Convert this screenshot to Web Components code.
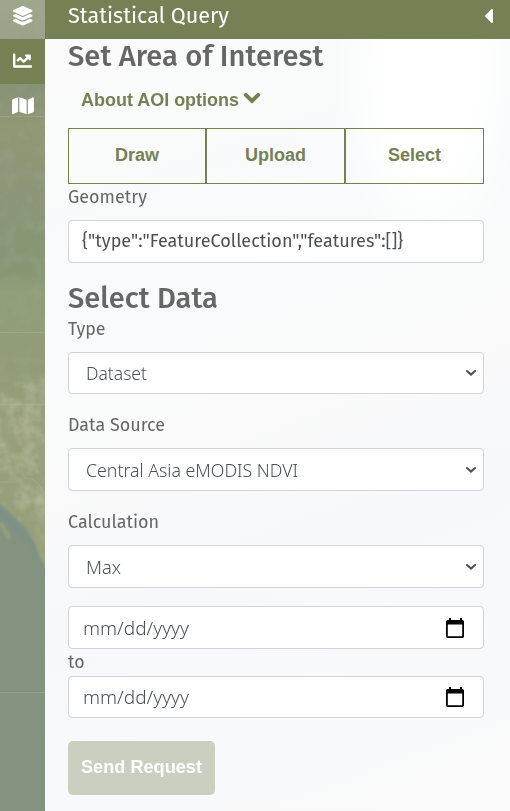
<!DOCTYPE html>
<html lang="en">
<head>
<meta charset="utf-8">
<title>Statistical Query</title>
<style>
html,body{margin:0;height:100%;overflow:hidden}
body{font-family:"Fira Sans","Noto Sans",sans-serif;color:#666;background:#f9fafb}
</style>
</head>
<body>
<query-app></query-app>
<script>
const define=(name,html,setup)=>customElements.define(name,class extends HTMLElement{
  connectedCallback(){
    if(this.shadowRoot)return;
    const t=document.createElement('template');t.innerHTML=html;
    this.attachShadow({mode:'open'}).appendChild(t.content.cloneNode(true));
    if(setup)setup(this,this.shadowRoot);
  }
});

/* Text fitted horizontally to a given advance width. */
define('fit-text',`<style>:host{display:block;white-space:pre}span{display:inline-block;transform-origin:0 50%}</style><span><slot></slot></span>`,(el,r)=>{
  const s=r.querySelector('span'),w=+el.getAttribute('w');
  s.style.transform='scaleX('+w/s.getBoundingClientRect().width+')';
  el.style.width=w+'px';
});

const icons={
layers:['0 0 512 512','M12.41 148.02l232.94 105.67c6.8 3.09 14.49 3.09 21.29 0l232.94-105.67c16.55-7.51 16.55-32.52 0-40.03L266.65 2.31a25.607 25.607 0 0 0-21.29 0L12.41 107.98c-16.55 7.51-16.55 32.53 0 40.04zm487.18 88.28l-58.09-26.33-161.64 73.27c-7.56 3.43-15.59 5.17-23.86 5.17s-16.29-1.74-23.86-5.17L70.51 209.97l-58.1 26.33c-16.55 7.5-16.55 32.5 0 40l232.94 105.59c6.8 3.08 14.49 3.08 21.29 0L499.59 276.3c16.55-7.5 16.55-32.5 0-40zm0 127.8l-57.87-26.23-161.86 73.37c-7.56 3.43-15.59 5.17-23.86 5.17s-16.29-1.74-23.86-5.17L70.29 337.87 12.41 364.1c-16.55 7.5-16.55 32.5 0 40l232.94 105.59c6.8 3.08 14.49 3.08 21.29 0L499.59 404.1c16.55-7.5 16.55-32.5 0-40z'],
chart:['0 0 512 512','M496 384H64V80c0-8.84-7.16-16-16-16H16C7.16 64 0 71.16 0 80v336c0 17.67 14.33 32 32 32h464c8.84 0 16-7.16 16-16v-32c0-8.84-7.16-16-16-16zM464 96H345.94c-21.38 0-32.09 25.85-16.97 40.97l32.4 32.4L288 242.75l-73.37-73.37c-12.5-12.5-32.76-12.5-45.25 0l-68.69 68.69c-6.25 6.25-6.25 16.38 0 22.63l22.62 22.62c6.25 6.25 16.38 6.25 22.63 0L192 237.25l73.37 73.37c12.5 12.5 32.76 12.5 45.25 0l96-96 32.4 32.4c15.12 15.12 40.97 4.41 40.97-16.97V112c.01-8.84-7.15-16-15.99-16z'],
map:['0 0 576 512','M0 117.66v346.32c0 11.32 11.43 19.06 21.94 14.86L160 416V32L20.12 87.95A32.006 32.006 0 0 0 0 117.66zM192 416l192 64V96L192 32v384zM554.06 33.16L416 96v384l139.88-55.95A31.996 31.996 0 0 0 576 394.34V48.02c0-11.32-11.43-19.06-21.94-14.86z'],
chevron:['0 0 448 512','M207.029 381.476L12.686 187.132c-9.373-9.373-9.373-24.569 0-33.941l22.667-22.667c9.357-9.357 24.522-9.375 33.901-.04L224 284.505l154.745-154.021c9.379-9.335 24.544-9.317 33.901.04l22.667 22.667c9.373 9.373 9.373 24.569 0 33.941L240.971 381.476c-9.373 9.372-24.569 9.372-33.942 0z'],
caret:['0 0 192 512','M192 127.338v257.324c0 17.818-21.543 26.741-34.142 14.142L29.196 270.142c-7.81-7.81-7.81-20.474 0-28.284l128.662-128.662c12.599-12.6 34.142-3.676 34.142 14.142z'],
arrow:['0 0 12 8','M2 2 L6 5.6 L10 2'],
calendar:['0 0 20 22','M4 1h2v2h9V1h2v2h.2C18.3 3 19 3.8 19 4.8v14.400c0 1-.8 1.800-1.800 1.800H2.800C1.800 21 1 20.200 1 19.200V4.800C1 3.800 1.800 3 2.800 3H4zM2.800 7.500v11.700h14.400V7.500z']
};
define('ui-icon',`<style>:host{display:block;flex:none}svg{display:block;width:100%;height:100%;overflow:visible;fill:currentColor}</style><svg><path fill-rule="evenodd"/></svg>`,(el,r)=>{
  const name=el.getAttribute('name'),[box,d]=icons[name],svg=r.querySelector('svg'),p=r.querySelector('path');
  svg.setAttribute('viewBox',box);p.setAttribute('d',d);
  if(name==='arrow'){p.setAttribute('fill','none');p.setAttribute('stroke','currentColor');p.setAttribute('stroke-width','2');p.setAttribute('stroke-linecap','round')}
  if(name==='chevron'){p.setAttribute('stroke','currentColor');p.setAttribute('stroke-width','34')}
  el.style.width=el.getAttribute('w')+'px';el.style.height=el.getAttribute('h')+'px';
});

define('terrain-map',`<style>:host{display:block}svg{display:block}</style>
<svg width="45" height="811" viewBox="0 0 45 811">
<defs><linearGradient id="g" x1="0" y1="0" x2="0" y2="811" gradientUnits="userSpaceOnUse">
<stop offset="0" stop-color="#9ca589"/><stop offset=".045" stop-color="#98a184"/><stop offset=".1" stop-color="#869276"/><stop offset=".16" stop-color="#909774"/><stop offset=".25" stop-color="#8b9676"/><stop offset=".335" stop-color="#879672"/><stop offset=".36" stop-color="#919f79"/><stop offset=".44" stop-color="#909c76"/><stop offset=".53" stop-color="#989f7b"/><stop offset=".62" stop-color="#95a079"/></linearGradient>
<linearGradient id="f" x2="0" y2="1"><stop stop-color="#000"/><stop offset=".25" stop-color="#fff"/><stop offset=".7" stop-color="#fff"/><stop offset="1" stop-color="#000"/></linearGradient>
<mask id="m"><rect y="350" width="45" height="210" fill="url(#f)"/></mask>
<filter id="n" x="0" y="0" width="1" height="1"><feTurbulence type="fractalNoise" baseFrequency=".055" numOctaves="3" seed="6"/><feColorMatrix values="0 0 0 0 .72  0 0 0 0 .7  0 0 0 0 .55  2 0 0 0 -.8"/></filter>
<filter id="d" x="0" y="0" width="1" height="1"><feTurbulence type="fractalNoise" baseFrequency=".06" numOctaves="4" seed="19"/><feColorMatrix values="0 0 0 0 .36  0 0 0 0 .46  0 0 0 0 .38  1.8 0 0 0 -.85"/></filter>
<filter id="b"><feGaussianBlur stdDeviation="1.5"/></filter></defs>
<rect width="45" height="811" fill="url(#g)"/>
<rect width="45" height="810" filter="url(#d)" opacity=".3"/>
<g mask="url(#m)"><rect y="350" width="45" height="210" filter="url(#n)" opacity=".5"/></g>
<path d="M-4 500 6 509 16 519 26 529 35 544 39 556 49 575V820H-4z" fill="#7f9185" filter="url(#b)"/>
<path d="M-4 513 2 522 12 532 28 543 38 560 49 578V820H-4z" fill="#83937f" filter="url(#b)"/>
<path d="M0 523 5 530 10 539" fill="none" stroke="#98a17d" stroke-width="4" filter="url(#b)"/>
<path d="M0 116.500H45M0 332.500H45M0 404.500H45M0 692.500H45M0 482H17Q33 470 45 495" fill="none" stroke="#b3ba9c" stroke-opacity=".35"/>
</svg>`);

define('side-rail',`<style>:host{display:block;position:relative;width:45px;height:811px;overflow:hidden;color:#fff}
nav{position:absolute;inset:0;display:flex;flex-direction:column}
div{height:45px;box-sizing:border-box;display:flex;align-items:center;justify-content:center;padding-bottom:3px}
.first{height:39px;background:#a6ad9b33;padding-bottom:8px}.on{background:#758055}.map{padding-bottom:2px}</style>
<terrain-map></terrain-map><nav><div class="first"><ui-icon name="layers" w="19.500" h="19.500"></ui-icon></div><div class="on"><ui-icon name="chart" w="19" h="19"></ui-icon></div><div class="map"><ui-icon name="map" w="22" h="19.500"></ui-icon></div></nav>`);

define('form-label',`<style>:host{display:block;height:var(--h,36px);box-sizing:border-box;padding-top:var(--top,0);font-size:18px;line-height:26px}</style><slot></slot>`);
define('form-field',`<style>:host{display:flex;align-items:center;justify-content:space-between;box-sizing:border-box;height:var(--h,43px);border:1px solid #ced4da;border-radius:4px;background:#fff;color:#495057;font-size:18px;line-height:26px;padding:0 var(--right,6px) 0 var(--left,17px)}</style><slot></slot>`);
define('section-title',`<style>:host{display:block;height:var(--h,34px);box-sizing:border-box;padding-top:var(--top,0);font-size:28.800px;font-weight:500;line-height:35px}</style><slot></slot>`);
define('option-group',`<style>:host{display:flex;height:56px;color:#758055;font:bold 18px/26px "Liberation Sans",sans-serif}
div{flex:0 0 138px;display:flex;align-items:center;justify-content:center;border:1px solid;box-sizing:border-box;padding-bottom:2px}.mid,.last{flex-basis:139px}</style><div>Draw</div><div class="mid">Upload</div><div class="last">Select</div>`);

define('query-app',`<style>
:host{display:grid;grid-template-columns:45px 1fr;width:510px;height:811px}
main{background:radial-gradient(ellipse 95px 200px at 385px 70px,#fff 50%,#fff0),linear-gradient(160deg,#fafaf9 0%,#f8fafb 30%,#fafafa 49%,#f7f8fb 65%,#f8f9fb 79%,#fafafa 100%);min-width:0}
header{height:39px;box-sizing:border-box;background:#758055;color:#fff;padding:0 17px 8px 23px;display:flex;align-items:center;justify-content:space-between;font-size:21.600px;line-height:30px}
section{padding:0 26px 0 23px}
.about{height:55px;box-sizing:border-box;padding:14px 0 0 13px;display:flex;align-items:flex-start;gap:5px;color:#758055;font:bold 18px/27px "Liberation Sans",sans-serif}
.about ui-icon{margin-top:2px}
.light{font-family:"Noto Sans",sans-serif;font-weight:300;font-size:17.500px}
button{display:flex;align-items:center;justify-content:center;margin:23px 0 0;padding:0 0 2px;width:147px;height:54px;border:0;border-radius:5px;background:#cbcfc0;color:#fff;font:bold 18px "Liberation Sans",sans-serif}
</style>
<side-rail></side-rail>
<main><header><fit-text w="161">Statistical Query</fit-text><ui-icon name="caret" w="9" h="24"></ui-icon></header>
<section>
<section-title><fit-text w="255.500">Set Area of Interest</fit-text></section-title>
<div class="about"><fit-text w="158">About AOI options</fit-text><ui-icon name="chevron" w="16" h="18"></ui-icon></div>
<option-group></option-group>
<form-label><fit-text w="79">Geometry</fit-text></form-label>
<form-field style="--left:13px"><fit-text w="321" style="margin-top:-2px">{"type":"FeatureCollection","features":[]}</fit-text></form-field>
<section-title style="--h:53px;--top:18px"><fit-text w="150">Select Data</fit-text></section-title>
<form-label><fit-text w="37.500">Type</fit-text></form-label>
<form-field style="--h:42px"><fit-text class="light" w="61">Dataset</fit-text><ui-icon name="arrow" w="12" h="8"></ui-icon></form-field>
<form-label style="--h:54px;--top:18px"><fit-text w="97">Data Source</fit-text></form-label>
<form-field><fit-text class="light" w="212">Central Asia eMODIS NDVI</fit-text><ui-icon name="arrow" w="12" h="8"></ui-icon></form-field>
<form-label style="--h:54px;--top:18px"><fit-text w="91">Calculation</fit-text></form-label>
<form-field><fit-text class="light" w="35">Max</fit-text><ui-icon name="arrow" w="12" h="8"></ui-icon></form-field>
<form-field style="--left:14px;--right:18px;margin-top:18px"><fit-text class="light" w="106">mm/dd/yyyy</fit-text><ui-icon name="calendar" style="color:#000" w="20" h="22"></ui-icon></form-field>
<form-label style="--h:27px"><fit-text w="16.500">to</fit-text></form-label>
<form-field style="--h:42px;--left:14px;--right:18px"><fit-text class="light" w="106">mm/dd/yyyy</fit-text><ui-icon name="calendar" style="color:#000" w="20" h="22"></ui-icon></form-field>
<button disabled><fit-text w="121">Send Request</fit-text></button>
</section></main>`);
</script>
</body>
</html>
